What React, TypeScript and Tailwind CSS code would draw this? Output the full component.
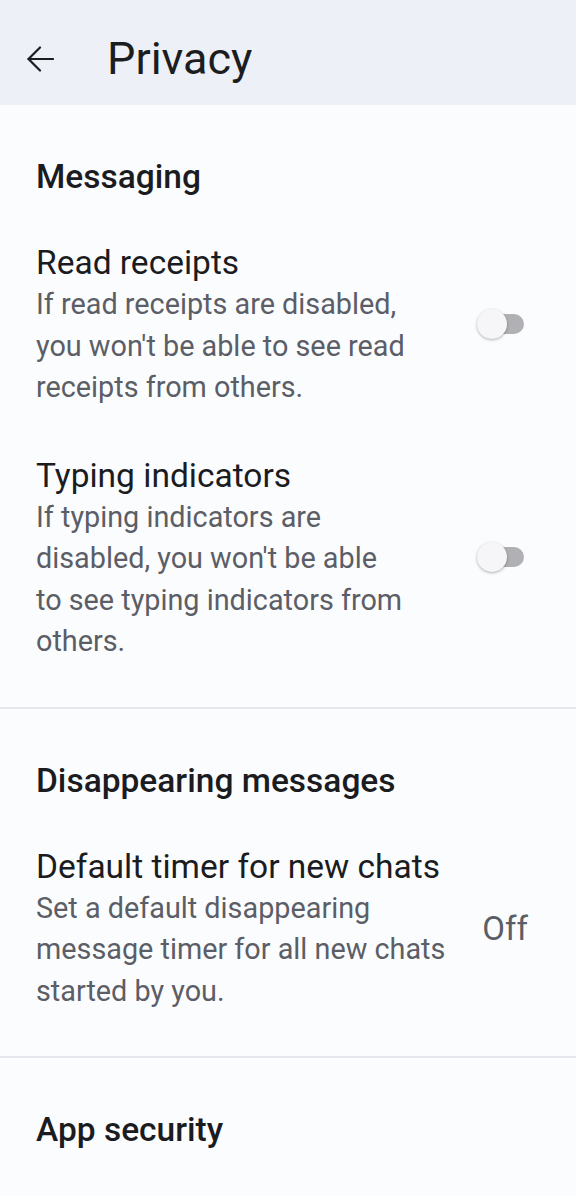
export default function App() {
  const font = { fontFamily: 'Roboto, "Noto Sans", sans-serif' };

  return (
    <div className="min-h-[1196px] w-full bg-[#fbfcfe]" style={font}>
      {/* top app bar */}
      <header className="flex h-[105px] items-center bg-[#edf0f7] pt-[13px]">
        <button className="ml-[27px] flex h-[26px] w-[27px] items-center justify-center text-[#1c1d21]">
          <svg width="27" height="26" viewBox="0 0 27 26" fill="none" stroke="currentColor" strokeWidth="2.2" strokeLinecap="round" strokeLinejoin="round">
            <path d="M13 1.5 1.5 13 13 24.5" />
            <path d="M1.5 13H26" />
          </svg>
        </button>
        <h1 className="ml-[53px] text-[45px] leading-[52px] text-[#1c1d21]">Privacy</h1>
      </header>

      <Section title="Messaging">
        <SwitchRow
          title="Read receipts"
          lines={["If read receipts are disabled,", "you won't be able to see read", "receipts from others."]}
        />
        <SwitchRow
          title="Typing indicators"
          lines={["If typing indicators are", "disabled, you won't be able", "to see typing indicators from", "others."]}
        />
      </Section>

      <div className="h-[2px] bg-[#e4e6eb]" />

      <Section title="Disappearing messages">
        <div className="flex items-center py-[23px] pl-9 pr-[48px]">
          <div className="min-w-0 flex-1">
            <div className="text-[33.5px] leading-[42px] text-[#1b1c1f]">Default timer for new chats</div>
            <Description lines={["Set a default disappearing", "message timer for all new chats", "started by you."]} />
          </div>
          <div className="ml-[24px] text-[33px] leading-[42px] text-[#5b5e66]">Off</div>
        </div>
      </Section>

      <div className="h-[2px] bg-[#e4e6eb]" />

      <Section title="App security" />
    </div>
  );
}

function Section({ title, children }: { title: string; children?: React.ReactNode }) {
  return (
    <section className="pt-[51px] pb-[21px]">
      <h2 className="mb-[21px] px-9 text-[33.5px] font-medium leading-[42px] text-[#1b1c1f]">{title}</h2>
      {children}
    </section>
  );
}

function Description({ lines }: { lines: string[] }) {
  return (
    <div className="text-[28.8px] leading-[41.5px] text-[#5b5e66]">
      {lines.map((line, i) => (
        <div key={i} className="whitespace-nowrap">
          {line}
        </div>
      ))}
    </div>
  );
}

function SwitchRow({ title, lines }: { title: string; lines: string[] }) {
  return (
    <div className="flex items-center py-[23px] pl-9 pr-[52px]">
      <div className="min-w-0 flex-1">
        <div className="text-[33.5px] leading-[42px] text-[#1b1c1f]">{title}</div>
        <Description lines={lines} />
      </div>
      <div className="relative -mt-[3px] ml-[20px] h-[30px] w-[47px] shrink-0">
        <div className="absolute right-0 top-[5px] h-[20px] w-[34px] rounded-full bg-[#b1b1b5]" />
        <div className="absolute left-0 top-0 h-[30px] w-[30px] rounded-full bg-[#f6f6f8] shadow-[0_1px_3px_rgba(0,0,0,0.3)]" />
      </div>
    </div>
  );
}
